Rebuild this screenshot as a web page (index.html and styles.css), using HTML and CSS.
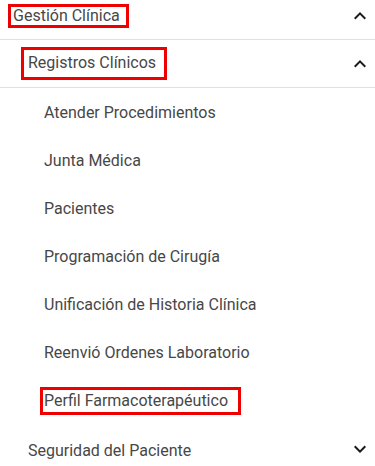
FILE: index.html
```html
<!DOCTYPE html>
<html lang="es">
<head>
<meta charset="utf-8">
<link rel="stylesheet" href="styles.css">
</head>
<body>
<nav class="menu">
  <div class="row lvl0 divider">
    <span class="label marked mark-top">Gestión Clínica</span>
    <svg class="chev" viewBox="0 0 24 24"><path d="M12 8l-6 6 1.41 1.41L12 10.83l4.59 4.58L18 14z"/></svg>
  </div>
  <div class="row lvl1 divider">
    <span class="label marked mark-sub">Registros Clínicos</span>
    <svg class="chev" viewBox="0 0 24 24"><path d="M12 8l-6 6 1.41 1.41L12 10.83l4.59 4.58L18 14z"/></svg>
  </div>
  <div class="row lvl2"><span class="label">Atender Procedimientos</span></div>
  <div class="row lvl2"><span class="label">Junta Médica</span></div>
  <div class="row lvl2"><span class="label">Pacientes</span></div>
  <div class="row lvl2"><span class="label">Programación de Cirugía</span></div>
  <div class="row lvl2"><span class="label">Unificación de Historia Clínica</span></div>
  <div class="row lvl2"><span class="label">Reenvió Ordenes Laboratorio</span></div>
  <div class="row lvl2"><span class="label marked mark-item">Perfil Farmacoterapéutico</span></div>
  <div class="row lvl1 closed">
    <span class="label">Seguridad del Paciente</span>
    <svg class="chev" viewBox="0 0 24 24"><path d="M16.59 8.59L12 13.17 7.41 8.59 6 10l6 6 6-6z"/></svg>
  </div>
</nav>
</body>
</html>
```
FILE: styles.css
```css
html, body {
  margin: 0;
  padding: 0;
  background: #ffffff;
  overflow: hidden;
}
body {
  font-family: Roboto, "Liberation Sans", sans-serif;
  color: #474747;
}
.menu {
  margin-top: -8px;
  display: flex;
  flex-direction: column;
}
.row {
  height: 48px;
  display: flex;
  align-items: center;
  justify-content: space-between;
  box-sizing: border-box;
  padding-right: 3px;
}
.divider {
  border-bottom: 1px solid #e0e0e0;
}
.lvl0 { padding-left: 8px; }
.lvl1 { padding-left: 21px; }
.lvl2 { padding-left: 40px; padding-top: 2px; }
.closed { padding-top: 5px; }
.label {
  font-size: 16px;
  line-height: 18px;
  display: inline-block;
  border: 3px solid transparent;
  padding: 0 2px;
}
.lvl1 .label { padding-left: 4px; }
.lvl2 .label { padding-left: 1px; }
.marked {
  border-color: #ee0000;
}
.mark-top { padding: 0 6px 0 2px; }
.lvl1 .mark-sub { padding: 4px 8px 5px 4px; }
.lvl2 .mark-item { padding: 2px 10px 2px 1px; }
.chev {
  width: 24px;
  height: 24px;
  fill: #1a1a1a;
}
.closed .chev { margin-top: -3px; }
```
